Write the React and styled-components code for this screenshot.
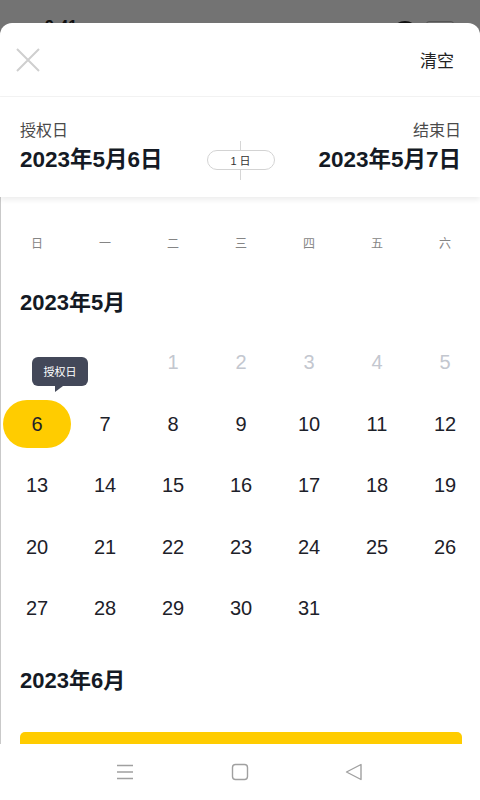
import styled, { createGlobalStyle } from "styled-components";

const GlobalStyle = createGlobalStyle`
  html, body {
    margin: 0;
    padding: 0;
    overflow: hidden;
  }
  body {
    font-family: "Liberation Sans", "Noto Sans CJK SC", sans-serif;
    color: #1f2329;
  }
`;

const weekdays = ["日", "一", "二", "三", "四", "五", "六"];

// 5月：前两格空，1-5 灰色
const mayCells = [
  null,
  null,
  ...Array.from({ length: 31 }, (_, i) => i + 1),
];

const App = () => {
  return (
    <Page>
      <GlobalStyle />
      <StatusBar>
        <StatusTime>9:41</StatusTime>
        <StatusIcons>
          <Signal />
          <Battery />
        </StatusIcons>
      </StatusBar>
      <Sheet>
        <Header>
          <CloseButton aria-label="close">
            <svg width="24" height="24" viewBox="0 0 24 24">
              <path
                d="M1 1 L23 23 M23 1 L1 23"
                stroke="#cfcfcf"
                strokeWidth="2"
                fill="none"
              />
            </svg>
          </CloseButton>
          <ClearButton>清空</ClearButton>
        </Header>

        <DateBar>
          <DateBlock>
            <DateLabel>授权日</DateLabel>
            <DateValue>2023年5月6日</DateValue>
          </DateBlock>
          <Duration>
            <DurationPill>1 日</DurationPill>
          </Duration>
          <DateBlock align="right">
            <DateLabel>结束日</DateLabel>
            <DateValue>2023年5月7日</DateValue>
          </DateBlock>
        </DateBar>

        <Scroll>
          <WeekRow>
            {weekdays.map((w) => (
              <WeekDay key={w}>{w}</WeekDay>
            ))}
          </WeekRow>

          <MonthTitle>2023年5月</MonthTitle>
          <DayGrid>
            {mayCells.map((d, i) => (
              <DayCell key={i}>
                {d === 6 && <Tip>授权日</Tip>}
                {d !== null && (
                  <DayNum disabled={d < 6} selected={d === 6}>
                    {d}
                  </DayNum>
                )}
              </DayCell>
            ))}
          </DayGrid>

          <MonthTitle next>2023年6月</MonthTitle>
          <ConfirmButton />
        </Scroll>
      </Sheet>

      <NavBar>
        <svg width="18" height="18" viewBox="0 0 18 18">
          <path
            d="M1 2.5 H17 M1 9 H17 M1 15.5 H17"
            stroke="#a0a0a0"
            strokeWidth="1.4"
            fill="none"
          />
        </svg>
        <svg width="18" height="18" viewBox="0 0 18 18">
          <rect
            x="1.5"
            y="1.5"
            width="15"
            height="15"
            rx="3"
            stroke="#a0a0a0"
            strokeWidth="1.4"
            fill="none"
          />
        </svg>
        <svg width="18" height="18" viewBox="0 0 18 18">
          <path
            d="M16 1.5 L16 16.5 L1.5 9 Z"
            stroke="#a0a0a0"
            strokeWidth="1.4"
            strokeLinejoin="round"
            fill="none"
          />
        </svg>
      </NavBar>
    </Page>
  );
};

export default App;

const Page = styled.div`
  width: 480px;
  height: 800px;
  display: flex;
  flex-direction: column;
  background: #737373;
  overflow: hidden;
`;

const StatusBar = styled.div`
  height: 23px;
  flex-shrink: 0;
  overflow: hidden;
  display: flex;
  justify-content: space-between;
  padding: 17px 26px 0 45px;
  box-sizing: border-box;
`;

const StatusTime = styled.div`
  font-size: 16px;
  font-weight: 700;
  color: #111;
  line-height: 20px;
`;

const StatusIcons = styled.div`
  display: flex;
  gap: 10px;
  padding-top: 4px;
`;

const Signal = styled.div`
  width: 22px;
  height: 16px;
  border-radius: 50%;
  background: #111;
`;

const Battery = styled.div`
  width: 26px;
  height: 14px;
  border: 1px solid #555;
  border-radius: 3px;
`;

const Sheet = styled.div`
  flex: 1;
  min-height: 0;
  background: #fff;
  border-radius: 12px 12px 0 0;
  display: flex;
  flex-direction: column;
  overflow: hidden;
`;

const Header = styled.div`
  height: 74px;
  flex-shrink: 0;
  box-sizing: border-box;
  display: flex;
  align-items: center;
  justify-content: space-between;
  padding: 0 26px 0 16px;
  border-bottom: 1px solid #f3f3f3;
`;

const CloseButton = styled.div`
  width: 24px;
  height: 24px;
  display: flex;
`;

const ClearButton = styled.div`
  font-size: 17px;
  color: #222;
`;

const DateBar = styled.div`
  height: 100px;
  flex-shrink: 0;
  box-sizing: border-box;
  display: grid;
  grid-template-columns: 1fr auto 1fr;
  align-items: start;
  padding: 24px 19px 0 20px;
  box-shadow: 0 3px 5px rgba(0, 0, 0, 0.07);
  position: relative;
  z-index: 1;
`;

const DateBlock = styled.div`
  display: flex;
  flex-direction: column;
  align-items: ${({ align }) => (align === "right" ? "flex-end" : "flex-start")};
  gap: 5px;
`;

const DateLabel = styled.div`
  font-size: 16px;
  line-height: 20px;
  color: #4a4a4a;
`;

const DateValue = styled.div`
  font-size: 22.5px;
  line-height: 28px;
  font-weight: 700;
  color: #141a24;
`;

const Duration = styled.div`
  position: relative;
  width: 68px;
  height: 39px;
  display: flex;
  align-items: center;
  justify-content: center;
  margin-top: 20px;
  padding-bottom: 2px;
  box-sizing: border-box;

  &::before {
    content: "";
    position: absolute;
    left: 33px;
    top: 0;
    bottom: 0;
    width: 1px;
    background: #d6d6d6;
  }
`;

const DurationPill = styled.div`
  position: relative;
  width: 68px;
  height: 20px;
  box-sizing: border-box;
  border: 1px solid #d3d3d3;
  border-radius: 10px;
  background: #fff;
  font-size: 11px;
  color: #333;
  display: flex;
  align-items: center;
  justify-content: center;
`;

const Scroll = styled.div`
  flex: 1;
  min-height: 0;
  overflow: hidden;
  border-left: 1px solid #c9c9c9;
  display: flex;
  flex-direction: column;
`;

const WeekRow = styled.div`
  display: grid;
  grid-template-columns: repeat(7, 68px);
  padding: 36px 0 0 2px;
`;

const WeekDay = styled.div`
  height: 22px;
  line-height: 22px;
  text-align: center;
  font-size: 12px;
  color: #858585;
`;

const MonthTitle = styled.div`
  font-size: 22px;
  font-weight: 700;
  line-height: 28px;
  color: #141a24;
  padding-left: 19px;
  margin-top: ${({ next }) => (next ? "27px" : "34px")};
`;

const DayGrid = styled.div`
  display: grid;
  grid-template-columns: repeat(7, 68px);
  grid-auto-rows: 61.5px;
  padding: 15px 0 0 2px;
`;

const DayCell = styled.div`
  position: relative;
  display: flex;
  align-items: center;
  justify-content: center;
`;

const DayNum = styled.div`
  width: 68px;
  height: 48px;
  border-radius: 24px;
  display: flex;
  align-items: center;
  justify-content: center;
  font-size: 20px;
  color: ${({ disabled }) => (disabled ? "#c3c7cf" : "#1d2129")};
  background: ${({ selected }) => (selected ? "#ffcc00" : "transparent")};
`;

const Tip = styled.div`
  position: absolute;
  left: 29px;
  top: -37px;
  width: 56px;
  height: 29px;
  border-radius: 6px;
  background: #434859;
  color: #fff;
  font-size: 11px;
  display: flex;
  align-items: center;
  justify-content: center;
  z-index: 2;

  &::after {
    content: "";
    position: absolute;
    left: 23px;
    bottom: -6px;
    border-style: solid;
    border-width: 6px 8px 0 0;
    border-color: #434859 transparent transparent transparent;
  }
`;

const ConfirmButton = styled.div`
  flex-shrink: 0;
  height: 48px;
  margin: 37px 18px 0 19px;
  border-radius: 5px;
  background: #ffcc00;
`;

const NavBar = styled.div`
  height: 56px;
  flex-shrink: 0;
  background: #fff;
  display: flex;
  align-items: center;
  justify-content: space-between;
  padding: 0 117px 0 116px;
  box-sizing: border-box;
`;
